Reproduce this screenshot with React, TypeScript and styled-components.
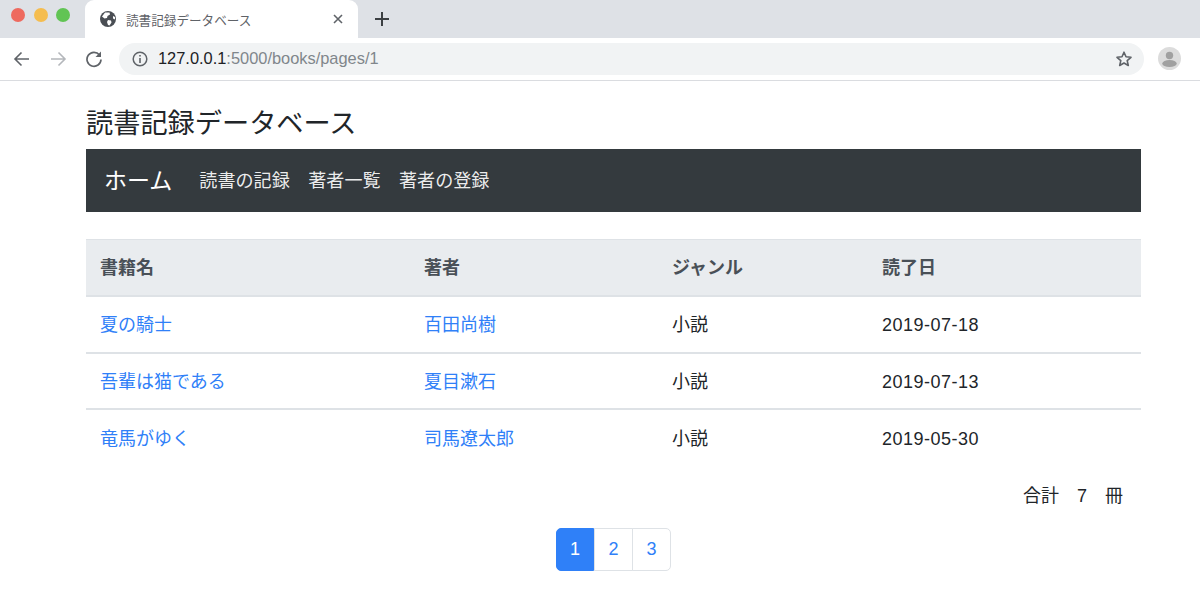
import React from 'react';
import styled, { createGlobalStyle } from 'styled-components';

const GlobalStyle = createGlobalStyle`
  html, body {
    margin: 0;
    padding: 0;
    background: #fff;
    font-family: 'Liberation Sans', 'Noto Sans CJK JP', sans-serif;
    color: #212529;
  }
  * { box-sizing: border-box; }
`;

const Window = styled.div`
  width: 1200px;
  height: 595px;
  overflow: hidden;
`;

const TabStrip = styled.div`
  height: 38px;
  background: #dee1e6;
  display: flex;
  align-items: flex-end;
`;
const Lights = styled.div`
  width: 85px;
  height: 38px;
  padding: 8px 0 0 11px;
  display: flex;
  gap: 8.5px;
`;
const Light = styled.span<{ $color: string }>`
  width: 14px;
  height: 14px;
  border-radius: 50%;
  background: ${(p) => p.$color};
`;
const Tab = styled.div`
  width: 273px;
  height: 38px;
  background: #fff;
  border-radius: 9px 9px 0 0;
  display: flex;
  align-items: center;
  padding: 0 14px 0 15px;
  font-size: 12.6px;
  color: #5f6368;
`;
const TabTitle = styled.span`
  margin-left: 10px;
  flex: 1;
`;
const NewTab = styled.div`
  width: 48px;
  height: 38px;
  display: flex;
  align-items: center;
  justify-content: center;
`;

const Toolbar = styled.div`
  height: 43px;
  background: #fff;
  border-bottom: 1px solid #dadce0;
  display: flex;
  align-items: center;
  padding: 0 19px 1px 13px;
`;
const NavIcons = styled.div`
  display: flex;
  align-items: center;
  gap: 18px;
  width: 106px;
`;
const Omnibox = styled.div`
  flex: 1;
  height: 32px;
  border-radius: 16px;
  background: #f1f3f4;
  display: flex;
  align-items: center;
  padding: 0 11px 0 13px;
  font-size: 16.4px;
  color: #202124;
`;
const Host = styled.span`
  margin-left: 10px;
`;
const UrlRest = styled.span`
  flex: 1;
  color: #80868b;
`;
const Avatar = styled.div`
  margin-left: 14px;
  width: 23px;
  height: 23px;
  border-radius: 50%;
  overflow: hidden;
  background: #dcdcdc;
`;

const Page = styled.main`
  width: 1055px;
  margin-left: 86px;
`;
const Title = styled.h1`
  margin: 0;
  height: 68px;
  padding: 25px 0 0;
  font-size: 27.2px;
  font-weight: 400;
  line-height: 36px;
  color: #212529;
`;
const NavBar = styled.nav`
  height: 63px;
  background: #343a3e;
  display: flex;
  align-items: center;
  padding: 0 0 3px 18px;
`;
const Brand = styled.a`
  font-size: 23px;
  color: #fff;
  margin-right: 27px;
`;
const NavLinks = styled.div`
  display: flex;
  gap: 18.4px;
`;
const NavLink = styled.a`
  font-size: 18.1px;
  color: rgba(255, 255, 255, 0.92);
`;

const Table = styled.table`
  width: 100%;
  margin-top: 27px;
  border-collapse: collapse;
  table-layout: fixed;
  font-size: 18px;
`;
const HeadRow = styled.tr`
  height: 56.5px;
  background: #e9ecef;
  border-top: 1px solid #dee2e6;
  border-bottom: 2px solid #dee2e6;
`;
const Th = styled.th<{ $width?: number }>`
  width: ${(p) => (p.$width ? `${p.$width}px` : 'auto')};
  padding: 2px 14px 0;
  text-align: left;
  font-weight: 700;
  line-height: 27px;
  color: #495057;
`;
const Row = styled.tr`
  height: 56.5px;
  border-bottom: 2px solid #dee2e6;
  &:last-child { border-bottom: none; }
`;
const Td = styled.td`
  padding: 3px 14px 0;
  line-height: 27px;
`;
const DateText = styled.span`
  letter-spacing: 0.5px;
`;
const BookLink = styled.a`
  color: #2f80f8;
`;

const Total = styled.div`
  margin-top: 16px;
  padding-right: 18px;
  height: 46px;
  line-height: 29px;
  font-size: 18px;
  text-align: right;
  white-space: pre;
`;

const Pagination = styled.ul`
  list-style: none;
  margin: 0;
  padding: 0;
  display: flex;
  justify-content: center;
`;
const PageItem = styled.li<{ $active?: boolean }>`
  width: 39px;
  height: 43px;
  display: flex;
  align-items: center;
  justify-content: center;
  font-size: 18px;
  border: 1px solid ${(p) => (p.$active ? '#2f80f8' : '#dee2e6')};
  background: ${(p) => (p.$active ? '#2f80f8' : '#fff')};
  color: ${(p) => (p.$active ? '#fff' : '#2f80f8')};
  &:first-child {
    width: 38px;
    border-radius: 5px 0 0 5px;
  }
  &:last-child {
    margin-left: -1px;
    border-radius: 0 5px 5px 0;
  }
`;

const books = [
  { title: '夏の騎士', author: '百田尚樹', genre: '小説', date: '2019-07-18' },
  { title: '吾輩は猫である', author: '夏目漱石', genre: '小説', date: '2019-07-13' },
  { title: '竜馬がゆく', author: '司馬遼太郎', genre: '小説', date: '2019-05-30' },
];

const App = () => (
  <Window>
    <GlobalStyle />
    <TabStrip>
      <Lights>
        <Light $color="#ee6a5f" />
        <Light $color="#f5bd4f" />
        <Light $color="#61c454" />
      </Lights>
      <Tab>
        <svg width="16" height="16" viewBox="0 0 16 16">
          <circle cx="8" cy="8" r="8" fill="#4a4e54" />
          <path d="M5 1.5 L9.5 1.5 L10 3.5 L7.5 5 L7 7 L4.5 7.5 L2 5.5 Z M8 9 L11 9.5 L11.5 11.5 L9.5 14.5 L8 14 L7 11 Z M13 5 L15 6 L15 8.5 L13 7.5 Z" fill="#fff" />
        </svg>
        <TabTitle>読書記録データベース</TabTitle>
        <svg width="12" height="12" viewBox="0 0 12 12">
          <path d="M2 2 L10 10 M10 2 L2 10" stroke="#5f6368" strokeWidth="1.6" />
        </svg>
      </Tab>
      <NewTab>
        <svg width="14" height="14" viewBox="0 0 14 14">
          <path d="M7 0 V14 M0 7 H14" stroke="#3c4043" strokeWidth="2" />
        </svg>
      </NewTab>
    </TabStrip>
    <Toolbar>
      <NavIcons>
        <svg width="18" height="18" viewBox="0 0 18 18" fill="none">
          <path d="M16 9 H2.5 M8.5 2.5 L2 9 L8.5 15.5" stroke="#5f6368" strokeWidth="1.6" />
        </svg>
        <svg width="18" height="18" viewBox="0 0 18 18" fill="none">
          <path d="M2 9 H15.5 M9.5 2.5 L16 9 L9.5 15.5" stroke="#b4b7bb" strokeWidth="1.6" />
        </svg>
        <svg width="18" height="18" viewBox="0 0 18 18" fill="none">
          <path d="M14.5 5 A7 7 0 1 0 16 9.5" stroke="#5f6368" strokeWidth="1.7" />
          <path d="M16 1.5 V7 H10.5 Z" fill="#5f6368" />
        </svg>
      </NavIcons>
      <Omnibox>
        <svg width="16" height="16" viewBox="0 0 16 16" fill="none">
          <circle cx="8" cy="8" r="6.8" stroke="#5f6368" strokeWidth="1.5" />
          <path d="M8 7 V12 M8 4 V5.6" stroke="#5f6368" strokeWidth="1.6" />
        </svg>
        <Host>127.0.0.1</Host>
        <UrlRest>:5000/books/pages/1</UrlRest>
        <svg width="18" height="18" viewBox="0 0 18 18" fill="none">
          <path d="M9 2.2 L11 6.8 L16 7.3 L12.2 10.6 L13.3 15.5 L9 13 L4.7 15.5 L5.8 10.6 L2 7.3 L7 6.8 Z" stroke="#5f6368" strokeWidth="1.6" strokeLinejoin="round" />
        </svg>
      </Omnibox>
      <Avatar>
        <svg width="23" height="23" viewBox="0 0 23 23">
          <circle cx="11.5" cy="8.5" r="3.7" fill="#a0a0a0" />
          <ellipse cx="11.5" cy="16.5" rx="7.2" ry="3.6" fill="#a0a0a0" />
        </svg>
      </Avatar>
    </Toolbar>
    <Page>
      <Title>読書記録データベース</Title>
      <NavBar>
        <Brand>ホーム</Brand>
        <NavLinks>
          <NavLink>読書の記録</NavLink>
          <NavLink>著者一覧</NavLink>
          <NavLink>著者の登録</NavLink>
        </NavLinks>
      </NavBar>
      <Table>
        <thead>
          <HeadRow>
            <Th $width={324}>書籍名</Th>
            <Th $width={248}>著者</Th>
            <Th $width={210}>ジャンル</Th>
            <Th>読了日</Th>
          </HeadRow>
        </thead>
        <tbody>
          {books.map((b) => (
            <Row key={b.title}>
              <Td><BookLink>{b.title}</BookLink></Td>
              <Td><BookLink>{b.author}</BookLink></Td>
              <Td>{b.genre}</Td>
              <Td><DateText>{b.date}</DateText></Td>
            </Row>
          ))}
        </tbody>
      </Table>
      <Total>{'合計　7　冊'}</Total>
      <Pagination>
        <PageItem $active>1</PageItem>
        <PageItem>2</PageItem>
        <PageItem>3</PageItem>
      </Pagination>
    </Page>
  </Window>
);

export default App;
